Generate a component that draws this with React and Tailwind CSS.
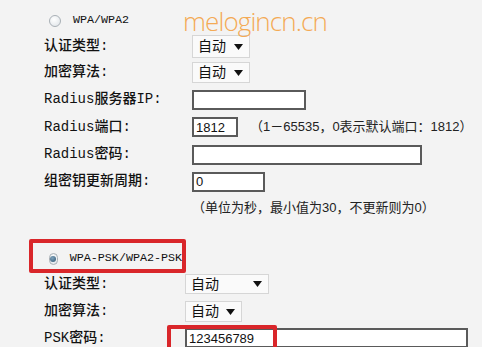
const LABEL_FONT = "font-['Liberation_Mono','Noto_Sans_CJK_SC',monospace]";
const SANS_FONT = "font-['Liberation_Sans','Noto_Sans_CJK_SC',sans-serif]";

// ── Radio ─────────────────────────────────────────────────────────────────────
const Radio = ({ checked }) => (
  <span className="flex items-center justify-center w-[12px] h-[12px] rounded-full border border-[#a9b0b6] bg-[radial-gradient(circle_at_40%_35%,#ffffff,#dde2e6)]">
    {checked && <span className="w-[6px] h-[6px] rounded-full bg-[radial-gradient(circle_at_40%_35%,#7fa3bd,#2f5570)]"></span>}
  </span>
);

// ── Select ────────────────────────────────────────────────────────────────────
const Select = ({ width, height }) => (
  <div className={`flex items-center justify-between border border-[#d6d6d6] bg-[#fafafa] pl-[5px] pr-[6px] ${width} ${height}`}>
    <span className={`${SANS_FONT} text-[14px] text-[#111]`}>自动</span>
    <svg width="9" height="6" viewBox="0 0 9 6"><path d="M0 0h9L4.5 6z" fill="#111" /></svg>
  </div>
);

// ── Input ─────────────────────────────────────────────────────────────────────
const Input = ({ width, value }) => (
  <div className={`flex items-center h-[20px] border-2 border-[#5a5a5a] bg-white pl-[2px] ${width}`}>
    <span className={`${SANS_FONT} text-[13px] text-[#111] leading-none`}>{value}</span>
  </div>
);

const Row = ({ label, h, col = "w-[192px]", children }) => (
  <div className={`flex items-center ${h}`}>
    <span className={`${col} pl-[44px] ${LABEL_FONT} text-[14px] font-medium text-[#111] shrink-0`}>{label}</span>
    {children}
  </div>
);

export default function App() {
  return (
    <div className="relative w-[482px] h-[347px] overflow-hidden bg-[#f3f3f3]">
      {/* Watermark */}
      <span className="absolute left-[183px] top-[4px] font-['Open_Sans',sans-serif] font-light text-[26px] leading-[34px] text-[#f4aa55] tracking-[-0.9px]">
        melogincn.cn
      </span>

      <div className="pt-[8px]">
        {/* WPA/WPA2 */}
        <div className="flex items-center h-[26px] pl-[49px] gap-[12px]">
          <Radio />
          <span className="font-['Liberation_Mono',monospace] text-[11.7px] text-[#111]">WPA/WPA2</span>
        </div>
        <Row label="认证类型:" h="h-[25px]">
          <Select width="w-[58px]" height="h-[23px]" />
        </Row>
        <Row label="加密算法:" h="h-[27px]">
          <Select width="w-[58px]" height="h-[21px]" />
        </Row>
        <Row label="Radius服务器IP:" h="h-[27px]">
          <Input width="w-[114px]" />
        </Row>
        <Row label="Radius端口:" h="h-[28px]">
          <Input width="w-[46px]" value="1812" />
          <span className={`ml-[12px] ${SANS_FONT} text-[13px] text-[#222]`}>（1－65535，0表示默认端口：1812）</span>
        </Row>
        <Row label="Radius密码:" h="h-[27px]">
          <Input width="w-[230px]" />
        </Row>
        <Row label="组密钥更新周期:" h="h-[27px]">
          <Input width="w-[73px]" value="0" />
        </Row>
        <div className="flex items-center h-[26px] pl-[192px]">
          <span className={`${SANS_FONT} text-[13px] text-[#222]`}>（单位为秒，最小值为30，不更新则为0）</span>
        </div>

        {/* WPA-PSK/WPA2-PSK */}
        <div className="mt-[18px] ml-[29px] w-[157px] h-[34px] border-4 border-[#d9262a] rounded-[2px] pt-[6px]">
          <div className="flex items-center h-[20px] pl-[16px] gap-[12px]">
            <Radio checked />
            <span className="font-['Liberation_Mono',monospace] text-[11.7px] text-[#111] whitespace-nowrap">WPA-PSK/WPA2-PSK</span>
          </div>
        </div>
        <Row label="认证类型:" h="h-[22px]" col="w-[185px]">
          <Select width="w-[84px]" height="h-[20px]" />
        </Row>
        <Row label="加密算法:" h="h-[25px] mt-[4px]" col="w-[185px]">
          <Select width="w-[57px]" height="h-[21px]" />
        </Row>
        <Row label="PSK密码:" h="h-[24px] mt-[2px]" col="w-[185px]">
          <div className="relative">
            <Input width="w-[283px]" value="123456789" />
            <span className="absolute left-[-18px] top-[-3px] w-[110px] h-[30px] border-4 border-[#d9262a] rounded-[2px]"></span>
          </div>
        </Row>
      </div>
    </div>
  );
}
